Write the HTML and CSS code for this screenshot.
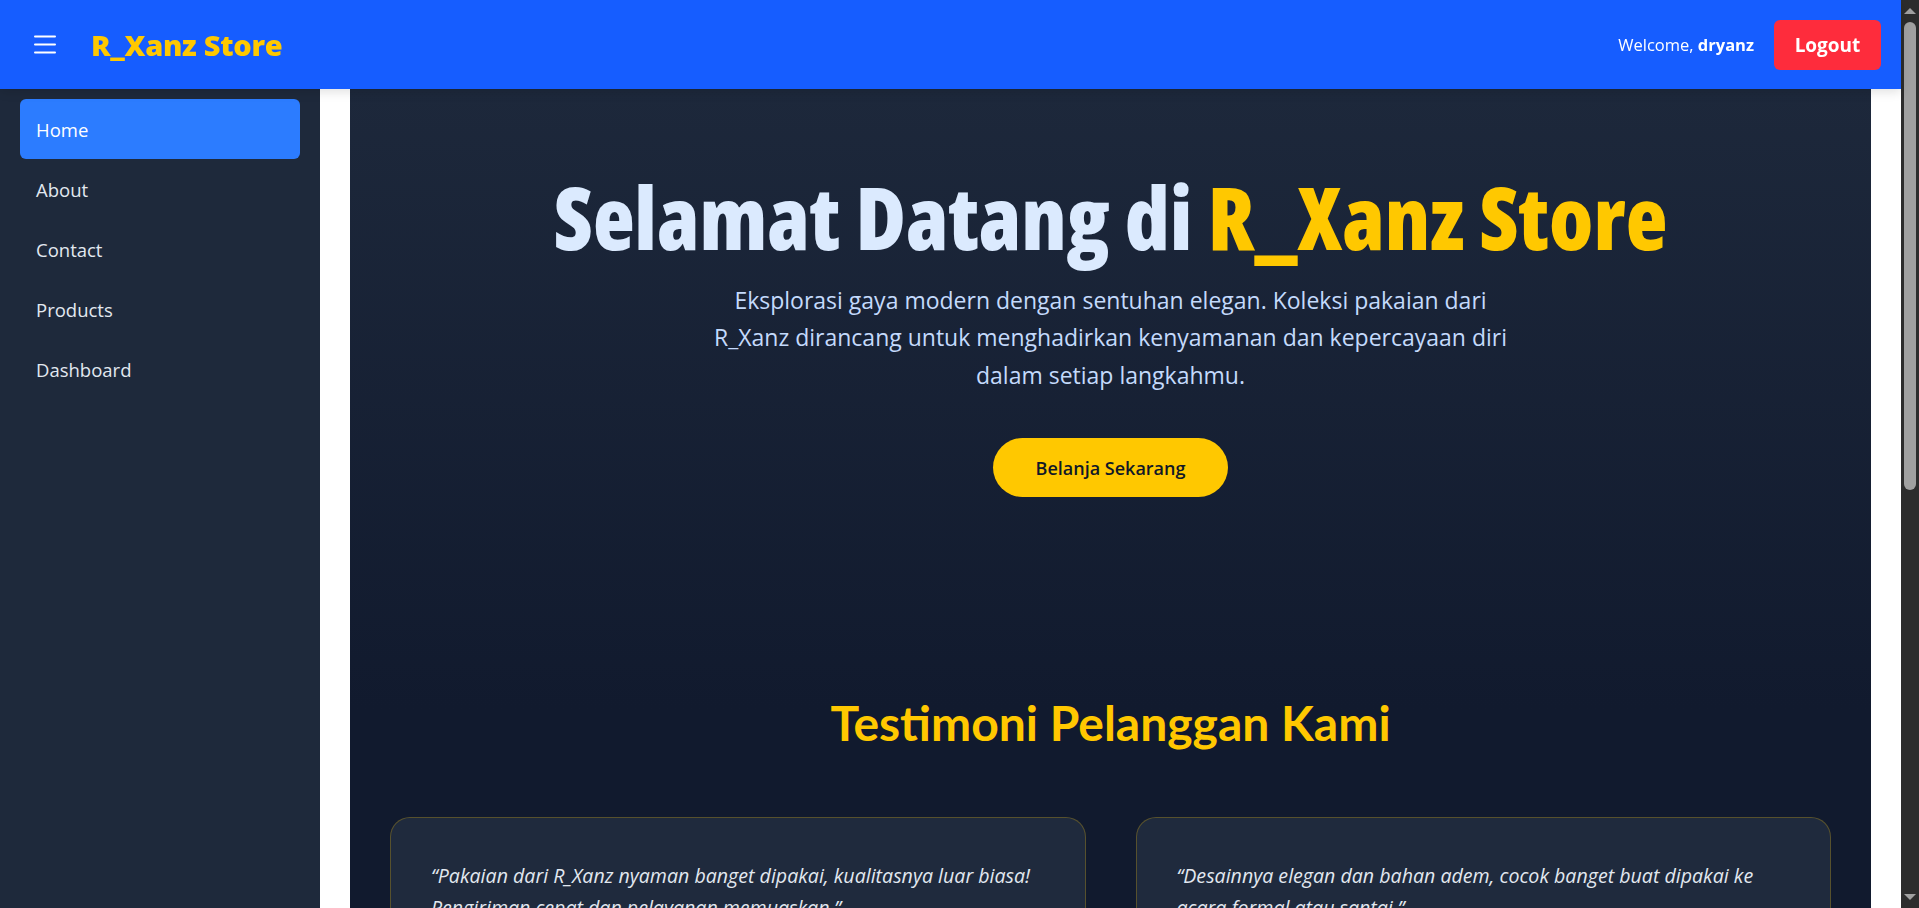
FILE: index.html
```html
<!DOCTYPE html>
<html lang="id">
<head>
<meta charset="utf-8">
<title>R_Xanz Store</title>
<link rel="stylesheet" href="styles.css">
</head>
<body>
<div class="page">
  <header class="topbar">
    <div class="brand">
      <button class="menu-btn" aria-label="Menu">
        <svg width="22" height="19" viewBox="0 0 22 19"><g stroke="#fff" stroke-width="2" stroke-linecap="round"><line x1="1" y1="1.5" x2="21" y2="1.5"/><line x1="1" y1="9.5" x2="21" y2="9.5"/><line x1="1" y1="17.5" x2="21" y2="17.5"/></g></svg>
      </button>
      <span class="logo">R_Xanz Store</span>
    </div>
    <div class="user">
      <span class="welcome">Welcome, <strong>dryanz</strong></span>
      <button class="logout">Logout</button>
    </div>
  </header>
  <div class="layout">
    <aside class="sidebar">
      <nav class="side-nav">
        <a class="side-link active" href="#">Home</a>
        <a class="side-link" href="#">About</a>
        <a class="side-link" href="#">Contact</a>
        <a class="side-link" href="#">Products</a>
        <a class="side-link" href="#">Dashboard</a>
      </nav>
    </aside>
    <main class="main">
      <div class="panel">
        <section class="hero">
          <h1 class="hero-title">Selamat Datang di <span class="accent">R_Xanz Store</span></h1>
          <p class="hero-text">Eksplorasi gaya modern dengan sentuhan elegan. Koleksi pakaian dari R_Xanz dirancang untuk menghadirkan kenyamanan dan kepercayaan diri dalam setiap langkahmu.</p>
          <a class="cta" href="#">Belanja Sekarang</a>
        </section>
        <section class="testimonials">
          <h2 class="section-title">Testimoni Pelanggan Kami</h2>
          <div class="cards">
            <div class="card">
              <p class="quote">“Pakaian dari R_Xanz nyaman banget dipakai, kualitasnya luar biasa! Pengiriman cepat dan pelayanan memuaskan.”</p>
              <p class="author">- Rizky, Jakarta</p>
            </div>
            <div class="card">
              <p class="quote">“Desainnya elegan dan bahan adem, cocok banget buat dipakai ke acara formal atau santai.”</p>
              <p class="author">- Nadia, Bandung</p>
            </div>
          </div>
        </section>
      </div>
    </main>
  </div>
</div>
<div class="scrollbar" aria-hidden="true">
  <span class="sb-arrow sb-up"></span>
  <span class="sb-thumb"></span>
  <span class="sb-arrow sb-down"></span>
</div>
</body>
</html>
```
FILE: styles.css
```css
* { box-sizing: border-box; }
html, body { margin: 0; padding: 0; }
body {
  font-family: "Open Sans", "Noto Sans", sans-serif;
  background: #ffffff;
  color: #e2e8f0;
}
.page { margin-right: 18px; }
.topbar {
  position: relative;
  z-index: 2;
  height: 89px;
  background: #165dff;
  display: flex;
  align-items: center;
  justify-content: space-between;
  padding: 0 20px 0 34px;
  box-shadow: 0 3px 10px rgba(0, 0, 0, 0.12);
}
.brand { display: flex; align-items: center; gap: 35px; }
.menu-btn {
  background: none; border: 0; padding: 0; margin: 0;
  display: flex; cursor: pointer;
}
.logo {
  font-weight: 800;
  font-size: 29px;
  color: #ffc800;
  letter-spacing: -0.3px;
}
.user { display: flex; align-items: center; gap: 20px; }
.welcome { color: #fff; font-size: 16.5px; }
.welcome strong { font-weight: 700; }
.logout {
  font-family: "Open Sans", sans-serif;
  background: #fe2c3c;
  color: #fff;
  border: 0;
  border-radius: 6px;
  font-weight: 700;
  font-size: 19px;
  width: 107px;
  height: 50px;
}
.layout { display: flex; min-height: 1100px; }
.sidebar {
  width: 320px;
  flex: 0 0 320px;
  background: #1e293b;
  padding: 10px 20px;
}
.side-nav { display: flex; flex-direction: column; }
.side-link {
  display: flex;
  align-items: center;
  height: 60px;
  padding: 0 16px;
  border-radius: 6px;
  color: #e2e8f0;
  text-decoration: none;
  font-size: 18.5px;
}
.side-link.active { background: #2c7cff; color: #fff; }
.main { flex: 1; padding: 0 30px; background: #fff; }
.panel {
  min-height: 100%;
  background: linear-gradient(180deg, #1d283b 0, #111a2e 620px, #111a2e 100%);
  padding: 0 40px 60px;
}
.hero { text-align: center; padding-top: 81px; display: flex; flex-direction: column; align-items: center; }
.hero-title {
  margin: 0;
  font-weight: 800;
  font-stretch: 80%;
  font-size: 86px;
  line-height: 1.1;
  color: #dbeafe;
  letter-spacing: 0;
}
.accent { color: #ffc800; }
.hero-text {
  margin: 17px 0 0;
  max-width: 820px;
  font-size: 23px;
  line-height: 37.5px;
  color: #c4dafc;
}
.cta {
  margin-top: 44px;
  display: inline-flex;
  align-items: center;
  justify-content: center;
  width: 235px;
  height: 59px;
  border-radius: 30px;
  background: #ffc800;
  color: #111827;
  font-weight: 600;
  font-size: 18px;
  text-decoration: none;
}
.testimonials { padding-top: 197px; }
.section-title {
  margin: 0 0 66px;
  text-align: center;
  color: #ffc800;
  font-family: Lato, "Open Sans", sans-serif;
  font-size: 48px;
  font-weight: 700;
}
.cards { display: grid; grid-template-columns: 1fr 1fr; gap: 50px; }
.card {
  background: #1f2a3d;
  border: 1px solid rgba(255, 200, 0, 0.25);
  border-radius: 20px;
  padding: 42px 40px 40px;
}
.quote {
  margin: 0;
  font-style: italic;
  font-size: 19.6px;
  line-height: 32px;
  color: #e2e8f0;
}
.author { margin: 16px 0 0; color: #ffc800; font-weight: 700; }
.scrollbar {
  position: fixed;
  top: 0;
  right: 0;
  width: 18px;
  height: 100vh;
  background: #2c2c2c;
  display: flex;
  flex-direction: column;
  align-items: center;
}
.sb-arrow { width: 0; height: 0; border-left: 6px solid transparent; border-right: 6px solid transparent; }
.sb-up { margin-top: 8px; border-bottom: 6px solid #a0a0a0; }
.sb-down { margin-top: auto; margin-bottom: 8px; border-top: 6px solid #a0a0a0; }
.sb-thumb {
  margin-top: 8px;
  width: 12px;
  height: 468px;
  border-radius: 6px;
  background: #a0a0a0;
}
```
